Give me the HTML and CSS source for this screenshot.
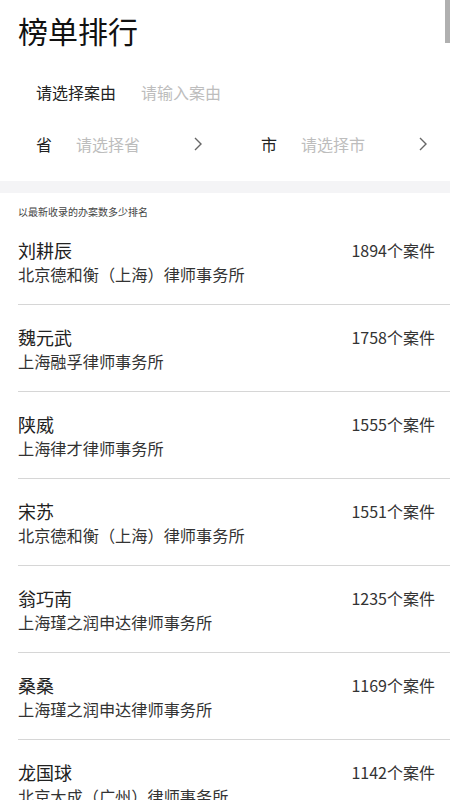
FILE: index.html
```html
<!DOCTYPE html>
<html lang="zh-CN">
<head>
<meta charset="utf-8">
<link rel="stylesheet" href="styles.css">
</head>
<body>
<div class="page">
  <div class="scrollbar"></div>
  <h1 class="title">榜单排行</h1>
  <div class="filter-row">
    <span class="label">请选择案由</span>
    <span class="placeholder">请输入案由</span>
  </div>
  <div class="region-row">
    <div class="region">
      <span class="label">省</span>
      <span class="placeholder">请选择省</span>
      <svg class="chev" width="10" height="16" viewBox="0 0 10 16"><path d="M2 2 L8 8 L2 14" fill="none" stroke="#666" stroke-width="1.4"/></svg>
    </div>
    <div class="region">
      <span class="label">市</span>
      <span class="placeholder">请选择市</span>
      <svg class="chev" width="10" height="16" viewBox="0 0 10 16"><path d="M2 2 L8 8 L2 14" fill="none" stroke="#666" stroke-width="1.4"/></svg>
    </div>
  </div>
  <div class="band"></div>
  <div class="caption">以最新收录的办案数多少排名</div>
  <ul class="list">
    <li class="item"><div class="info"><div class="name">刘耕辰</div><div class="firm">北京德和衡（上海）律师事务所</div></div><div class="count">1894个案件</div></li>
    <li class="item"><div class="info"><div class="name">魏元武</div><div class="firm">上海融孚律师事务所</div></div><div class="count">1758个案件</div></li>
    <li class="item"><div class="info"><div class="name">陕威</div><div class="firm">上海律才律师事务所</div></div><div class="count">1555个案件</div></li>
    <li class="item"><div class="info"><div class="name">宋苏</div><div class="firm">北京德和衡（上海）律师事务所</div></div><div class="count">1551个案件</div></li>
    <li class="item"><div class="info"><div class="name">翁巧南</div><div class="firm">上海瑾之润申达律师事务所</div></div><div class="count">1235个案件</div></li>
    <li class="item"><div class="info"><div class="name">桑桑</div><div class="firm">上海瑾之润申达律师事务所</div></div><div class="count">1169个案件</div></li>
    <li class="item"><div class="info"><div class="name">龙国球</div><div class="firm">北京大成（广州）律师事务所</div></div><div class="count">1142个案件</div></li>
  </ul>
</div>
</body>
</html>
```
FILE: styles.css
```css
html, body {
  margin: 0;
  padding: 0;
  background: #fff;
}
body {
  font-family: "Noto Sans CJK SC", "Noto Sans", sans-serif;
  color: #222;
  overflow: hidden;
}
.page {
  position: relative;
  width: 450px;
  height: 800px;
  overflow: hidden;
}
.scrollbar {
  position: absolute;
  top: 0;
  right: 0;
  width: 5px;
  height: 43px;
  background: #b0b0b0;
}
.title {
  margin: 0;
  padding: 10px 0 0 18px;
  font-size: 30px;
  line-height: 40px;
  font-weight: 400;
  color: #111;
}
.filter-row {
  display: flex;
  align-items: center;
  height: 52px;
  margin-top: 16px;
  padding-left: 36px;
  gap: 25px;
  font-size: 16px;
}
.label {
  color: #222;
  font-size: 16px;
}
.placeholder {
  color: #bdbdbd;
  font-size: 16px;
}
.region-row {
  display: grid;
  grid-template-columns: 1fr 1fr;
  height: 52px;
}
.region {
  display: flex;
  align-items: center;
  padding: 0 22px 0 36px;
  gap: 24px;
}
.region .chev {
  margin-left: auto;
}
.band {
  margin-top: 11px;
  height: 12px;
  background: #f4f4f6;
}
.caption {
  padding: 12px 0 0 18px;
  font-size: 10px;
  line-height: 14px;
  color: #444;
}
.list {
  list-style: none;
  margin: 0;
  padding: 0 0 0 18px;
}
.item {
  display: flex;
  justify-content: space-between;
  align-items: flex-start;
  padding: 19px 15px 18px 0;
  border-bottom: 1px solid #d6d6d6;
}
.item + .item {
  padding-top: 20px;
}
.name {
  font-size: 18px;
  line-height: 24px;
  color: #222;
}
.firm {
  font-size: 16.2px;
  line-height: 24px;
  color: #333;
}
.count {
  font-size: 16px;
  line-height: 24px;
  color: #333;
}
```
